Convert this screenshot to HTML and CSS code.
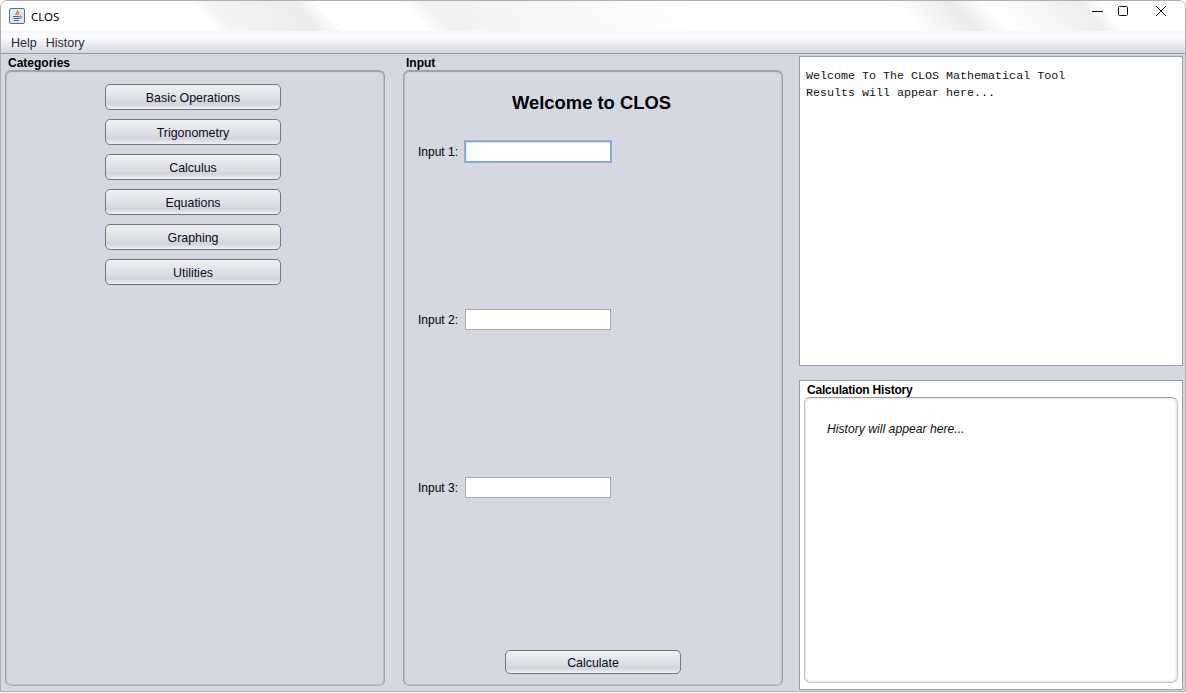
FILE: index.html
```html
<!DOCTYPE html>
<html lang="en">

<head>
    <meta charset="UTF-8">
    <meta name="viewport" content="width=device-width, initial-scale=1.0">
    <title>CLOS</title>
    <link rel="stylesheet" href="styles.css">
</head>

<body>
    <div class="window">
        <div class="title-bar">
            <svg class="app-icon" width="16" height="16" viewBox="0 0 16 16">
                <rect x="0.5" y="0.5" width="15" height="15" rx="1.5" fill="#dfe9f3" stroke="#4f7396" />
                <path d="M8.5 2.5c1 1.5-2 2.5-1.5 4.5M10 4c.5 1-1.500 1.500-1 3" fill="none" stroke="#d8641c" stroke-width="1.200" />
                <path d="M4 8.500h6.500M4.500 10.500h6M5 12.500h5M11 8c2 0 2 2-.5 2.500" fill="none" stroke="#3f6a94" />
            </svg>
            <span class="app-name">CLOS</span>
            <div class="window-controls">
                <svg width="12" height="12" viewBox="0 0 12 12"><path d="M0 6.500h11" stroke="#111" fill="none" /></svg>
                <svg width="12" height="12" viewBox="0 0 12 12"><rect x="1.500" y="1.500" width="9" height="9" rx="1" stroke="#111" fill="none" /></svg>
                <svg class="close-icon" width="12" height="12" viewBox="0 0 12 12"><path d="M1 1l10 10M11 1l-10 10" stroke="#111" fill="none" /></svg>
            </div>
        </div>

        <div class="menu-bar">
            <span>Help</span>
            <span>History</span>
        </div>

        <div class="content">
            <section class="column">
                <h2 class="section-title">Categories</h2>
                <div class="panel categories">
                    <button class="btn">Basic Operations</button>
                    <button class="btn">Trigonometry</button>
                    <button class="btn">Calculus</button>
                    <button class="btn">Equations</button>
                    <button class="btn">Graphing</button>
                    <button class="btn">Utilities</button>
                </div>
            </section>

            <section class="column middle">
                <h2 class="section-title">Input</h2>
                <div class="panel input-panel">
                    <h1 class="welcome">Welcome to CLOS</h1>
                    <div class="fields">
                        <label class="field">Input 1: <input class="text-input focused" type="text"></label>
                        <label class="field">Input 2: <input class="text-input" type="text"></label>
                        <label class="field">Input 3: <input class="text-input" type="text"></label>
                    </div>
                    <button class="btn calculate">Calculate</button>
                </div>
            </section>

            <div class="right-column">
                <pre class="output">Welcome To The CLOS Mathematical Tool
Results will appear here...</pre>
                <section class="history">
                    <h2 class="section-title">Calculation History</h2>
                    <div class="panel history-panel">
                        <p class="history-text">History will appear here...</p>
                    </div>
                </section>
            </div>
        </div>
    </div>
</body>

</html>
```

FILE: styles.css
```css
*,
*::before,
*::after {
    box-sizing: border-box;
}

html,
body {
    height: 100%;
}

body {
    margin: 0;
    background: #fff;
    font-family: "Liberation Sans", Arial, sans-serif;
    font-size: 12px;
    color: #000;
    overflow: hidden;
}

.window {
    display: flex;
    flex-direction: column;
    height: 692px;
    border: 1px solid #acaeb4;
    border-radius: 7px 7px 0 0;
    overflow: hidden;
}

/* streaks of the aero glass behind the title */
.title-bar {
    display: flex;
    align-items: center;
    height: 30px;
    padding-left: 8px;
    flex-shrink: 0;
    background: linear-gradient(48deg, #fff 160px, #f4f4f4 172px, #ececec 236px, #fff 254px, #fff 318px, #f1f1f1 334px, #fafafa 470px, #fff 528px, #fff 680px, #ebebeb 725px, #fff 750px, #f8f8f8 780px, #ededed 820px, #fff 835px);
}

.app-icon {
    margin-right: 6px;
}

.app-name {
    font-family: "Noto Sans", "Open Sans", sans-serif;
    font-size: 11.500px;
}

.window-controls {
    display: flex;
    gap: 13px;
    align-self: flex-start;
    margin-left: auto;
    margin-right: 18px;
    margin-top: 4px;
}

.close-icon {
    margin-left: 13px;
}

.menu-bar {
    display: flex;
    gap: 9px;
    align-items: center;
    height: 23px;
    padding: 2px 0 0 10px;
    flex-shrink: 0;
    background: linear-gradient(to bottom, #f6f8f8 0, #fdfefe 25%, #d4d7df 100%);
    border-bottom: 1px solid #9a9ca8;
    font-size: 12.500px;
    color: #2a2a3a;
}

.content {
    display: flex;
    flex: 1;
    min-height: 0;
    padding: 2px 2px 0 4px;
    background: #d5d8e0;
}

.column {
    display: flex;
    flex-direction: column;
    flex-shrink: 0;
    width: 380px;
    height: 630px;
    margin-right: 18px;
}

.column.middle {
    margin-right: 16px;
}

.section-title {
    margin: 0;
    padding-left: 3px;
    height: 14px;
    line-height: 14px;
    font-size: 12px;
    font-weight: bold;
}

.panel {
    flex: 1;
    border: 1px solid #a0a2a9;
    border-bottom-color: #b2b4bb;
    border-radius: 6px;
    box-shadow: inset 0 1px 1px #9da0a7, inset 0 0 0 1px #bfc1c8;
}

.categories {
    display: flex;
    flex-direction: column;
    align-items: center;
    gap: 9px;
    padding: 13px 4px 0 0;
}

.btn {
    width: 176px;
    height: 26px;
    flex-shrink: 0;
    padding: 2px 0 0;
    font-family: inherit;
    font-size: 12.400px;
    color: #0a0a1e;
    border: 1px solid #74767d;
    border-radius: 5px;
    background: linear-gradient(to bottom, #eff0f2 0%, #dddee3 60%, #d1d4dc 78%, #eef0f3 100%);
}

.input-panel {
    display: flex;
    flex-direction: column;
    align-items: center;
    padding-bottom: 11px;
}

.welcome {
    margin: 21px 3px 0 0;
    height: 21px;
    line-height: 21px;
    font-size: 18.400px;
    font-weight: bold;
}

.fields {
    display: flex;
    flex-direction: column;
    gap: 147px;
    align-self: flex-start;
    margin: 28px 0 0 14px;
}

.field {
    display: flex;
    align-items: center;
    gap: 7px;
    height: 21px;
}

.text-input {
    width: 146px;
    height: 21px;
    padding: 0 4px;
    border: 1px solid #a6a8b0;
    background: #fff;
    outline: none;
}

.text-input.focused {
    border-color: #7fa7d4;
    box-shadow: 0 0 0 1px #8db1da, inset 0 1px 0 #e2e2e2, inset 1px 0 0 #e8e8e8;
}

.calculate {
    height: 24px;
    margin-top: auto;
    padding-top: 1px;
}

.right-column {
    display: flex;
    flex-direction: column;
    flex-shrink: 0;
    gap: 14px;
    width: 384px;
}

.output {
    height: 310px;
    margin: 0;
    padding: 11px 6px;
    background: #fff;
    border: 1px solid #9a9ca8;
    font-family: "Liberation Mono", "Courier New", monospace;
    font-size: 11.680px;
    line-height: 17px;
    color: #111;
}

.history {
    display: flex;
    flex-direction: column;
    height: 310px;
    padding: 2px 4px 6px 4px;
    background: #fff;
    border: 1px solid #9a9ca8;
}

.history .section-title {
    letter-spacing: -0.200px;
}

.history-panel {
    border-color: #c2c3c7;
    border-top-color: #9a9ca2;
    box-shadow: inset 0 0 3px #c6c7cb;
}

.history-text {
    margin: 24px 0 0 22px;
    font-size: 12.200px;
    font-style: italic;
    color: #111;
}
```
